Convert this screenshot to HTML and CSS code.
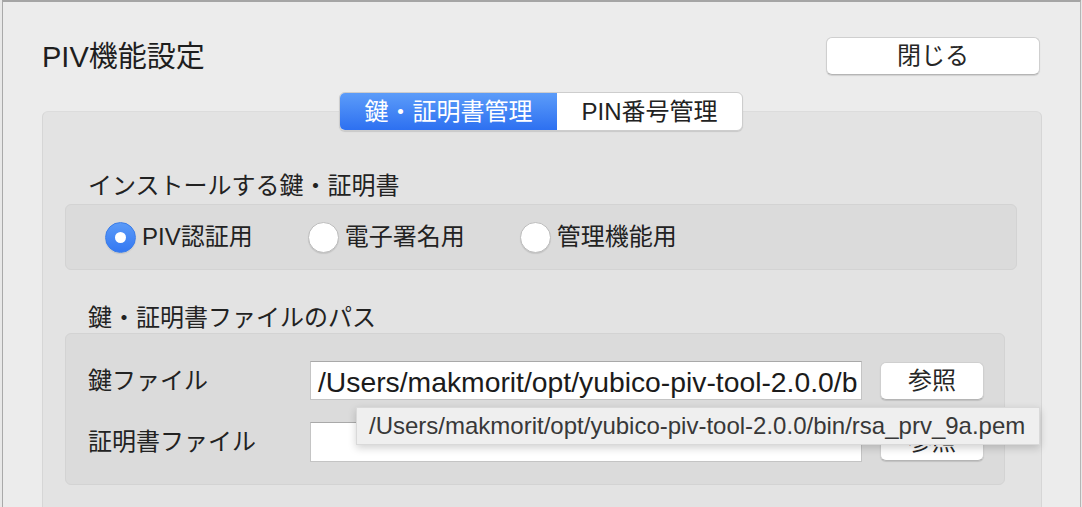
FILE: index.html
```html
<!DOCTYPE html>
<html lang="ja">
<head>
<meta charset="utf-8">
<title>PIV機能設定</title>
<link rel="stylesheet" href="styles.css">
</head>
<body>
<div class="window">
  <header class="header">
    <h1 class="title">PIV機能設定</h1>
    <button class="btn btn-close">閉じる</button>
  </header>
  <div class="tabs">
    <div class="segmented">
      <span class="seg seg-active">鍵・証明書管理</span>
      <span class="seg">PIN番号管理</span>
    </div>
    <div class="tabbox">
      <div class="section-label">インストールする鍵・証明書</div>
      <div class="group group-radio">
        <label class="radio-item"><span class="radio radio-on"></span><span class="radio-text">PIV認証用</span></label>
        <label class="radio-item"><span class="radio"></span><span class="radio-text">電子署名用</span></label>
        <label class="radio-item"><span class="radio"></span><span class="radio-text">管理機能用</span></label>
      </div>
      <div class="section-label section-label-2">鍵・証明書ファイルのパス</div>
      <div class="group group-path">
        <div class="path-row">
          <span class="path-label">鍵ファイル</span>
          <div class="field"><span class="field-text">/Users/makmorit/opt/yubico-piv-tool-2.0.0/b</span></div>
          <button class="btn btn-browse">参照</button>
        </div>
        <div class="path-row">
          <span class="path-label">証明書ファイル</span>
          <div class="field field-2"></div>
          <button class="btn btn-browse">参照</button>
        </div>
      </div>
    </div>
  </div>
  <div class="tooltip">/Users/makmorit/opt/yubico-piv-tool-2.0.0/bin/rsa_prv_9a.pem</div>
</div>
</body>
</html>
```

FILE: styles.css
```css
* { box-sizing: border-box; }

html, body {
  margin: 0;
  padding: 0;
  width: 1082px;
  height: 507px;
  overflow: hidden;
  background: #e8e8e8;
}

body {
  font-family: "Liberation Sans", "Noto Sans CJK JP", sans-serif;
  color: #222;
}

.window {
  position: relative;
  margin-left: 2px;
  width: 1079px;
  height: 507px;
  background: #ececec;
  border-top: 2px solid #a5a5a5;
  border-left: 1px solid #a9a9a9;
  border-right: 1px solid #b5b5b5;
  padding: 35px 40px 0 39px;
}

.header {
  display: flex;
  align-items: center;
  justify-content: space-between;
  height: 38px;
}

.title {
  margin: 0;
  padding-top: 2px;
  font-size: 29px;
  font-weight: 400;
  line-height: 38px;
  color: #1e1e1e;
}

.btn {
  font-family: inherit;
  font-size: 24px;
  color: #262626;
  background: #fff;
  border: 1px solid #cfcfcf;
  border-bottom-color: #b5b5b5;
  border-radius: 6px;
  box-shadow: 0 1px 1px rgba(0,0,0,0.12);
  padding: 0;
  line-height: 1;
}

.btn-close {
  width: 214px;
  height: 38px;
}

.tabs {
  margin-top: 17px;
  display: flex;
  flex-direction: column;
  align-items: center;
}

.segmented {
  position: relative;
  z-index: 1;
  display: flex;
  height: 39px;
  border-radius: 6px;
  background: #fff;
  border: 1px solid #cdcdcd;
  box-shadow: 0 1px 1px rgba(0,0,0,0.12);
  overflow: hidden;
}

.seg {
  display: flex;
  align-items: center;
  padding: 0 24px;
  font-size: 24px;
  line-height: 1;
  color: #222;
}

.seg-active {
  background: linear-gradient(#5c9cf9, #2d70f1);
  color: #fff;
  padding-right: 25px;
}

.tabbox {
  align-self: stretch;
  margin-top: -20px;
  margin-right: -2px;
  height: 420px;
  background: #e3e3e3;
  border: 1px solid #d6d6d6;
  border-top-color: #dcdcdc;
  border-radius: 6px;
  padding: 59px 24px 0 22px;
}

.section-label {
  margin-left: 23px;
  font-size: 24px;
  line-height: 30px;
  height: 30px;
  margin-bottom: 3px;
  color: #222;
}

.section-label-2 {
  margin-top: 33px;
  margin-bottom: 0;
}

.group {
  background: #dbdbdb;
  border: 1px solid #d3d3d3;
  border-radius: 6px;
}

.group-radio {
  height: 66px;
  display: flex;
  align-items: center;
  padding-left: 39px;
  gap: 55px;
}

.radio-item {
  display: flex;
  align-items: center;
  gap: 6px;
}

.radio {
  width: 31px;
  height: 31px;
  border-radius: 50%;
  background: #fff;
  border: 1px solid #bdbdbd;
  box-shadow: 0 1px 1px rgba(0,0,0,0.1);
  display: flex;
  align-items: center;
  justify-content: center;
}

.radio-on {
  background: linear-gradient(#5a9af8, #3478f2);
  border-color: #3b7de8;
}

.radio-on::after {
  content: "";
  width: 11px;
  height: 11px;
  border-radius: 50%;
  background: #fff;
}

.radio-text {
  font-size: 24px;
  line-height: 30px;
  color: #222;
}

.group-path {
  margin-right: 12px;
  height: 152px;
  padding: 27px 20px 0 22px;
  display: flex;
  flex-direction: column;
  gap: 22px;
}

.path-row {
  display: flex;
  align-items: center;
  height: 39px;
}

.path-label {
  width: 222px;
  font-size: 24px;
  line-height: 30px;
  color: #222;
}

.field {
  width: 552px;
  height: 39px;
  background: #fff;
  border: 1px solid #c4c4c4;
  border-top-color: #a9a9a9;
  padding: 2px 0 0 7px;
  display: flex;
  align-items: center;
}

.field-2 {
  height: 40px;
}

.field-text {
  white-space: nowrap;
  font-size: 28.3px;
  line-height: 34px;
  color: #1b1b1b;
}

.btn-browse {
  margin-left: 18px;
  width: 104px;
  height: 38px;
}

.tooltip {
  position: absolute;
  left: 353px;
  top: 405px;
  width: 684px;
  height: 38px;
  background: #efefef;
  border: 1px solid #d9d9d9;
  box-shadow: 0 3px 8px rgba(0,0,0,0.18);
  padding-left: 12px;
  display: flex;
  align-items: center;
  font-size: 24px;
  color: #383838;
  white-space: nowrap;
  z-index: 5;
}
```
